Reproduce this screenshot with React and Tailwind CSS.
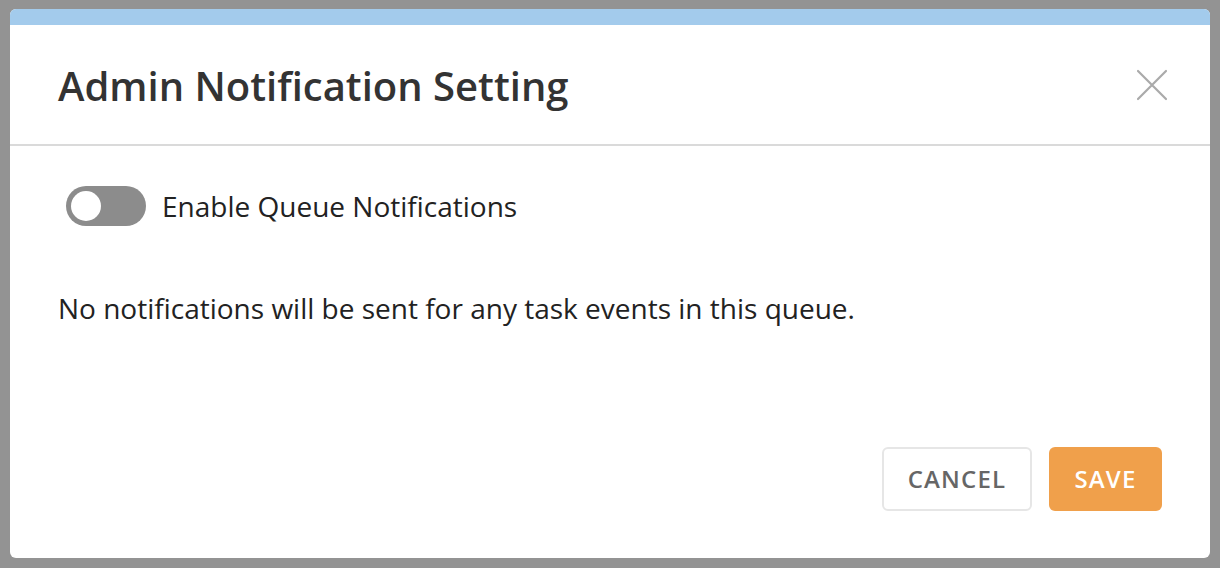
import { useState } from "react";

function App() {
  const [enabled, setEnabled] = useState(false);

  return (
    <div
      className="w-[1220px] h-[568px] bg-[#939393] pt-[9px] px-[10px] pb-[10px]"
      style={{ fontFamily: '"Open Sans", "Noto Sans", sans-serif' }}
    >
      <div className="h-full bg-white rounded-[6px] overflow-hidden flex flex-col">
        {/* top accent strip */}
        <div className="h-[16px] bg-[#a3cbec]" />

        {/* header */}
        <div className="h-[121px] flex items-center justify-between pl-[48px] pr-[42px] border-b-2 border-[#dadada]">
          <h1 className="text-[40px] leading-[48px] font-semibold text-[#333333] mt-[2px]">
            Admin Notification Setting
          </h1>
          <button className="w-[32px] h-[32px] flex items-center justify-center">
            <svg width="32" height="32" viewBox="0 0 32 32" fill="none">
              <path d="M2 2L30 30M30 2L2 30" stroke="#aaaaaa" strokeWidth="2.2" strokeLinecap="round" />
            </svg>
          </button>
        </div>

        {/* body */}
        <div className="px-[48px] pt-[40px]">
          <div className="flex items-center gap-[16px]">
            <button
              onClick={() => setEnabled(!enabled)}
              className={
                "ml-[8px] w-[80px] h-[40px] rounded-full flex items-center px-[5px] " +
                (enabled ? "bg-[#f0a04b] justify-end" : "bg-[#8c8c8c] justify-start")
              }
            >
              <span className="w-[30px] h-[30px] rounded-full bg-white" />
            </button>
            <span className="text-[28px] leading-[40px] text-[#222222]">Enable Queue Notifications</span>
          </div>

          <p className="mt-[62px] text-[28px] leading-[40px] text-[#222222]">
            No notifications will be sent for any task events in this queue.
          </p>
        </div>

        {/* footer */}
        <div className="mt-auto flex justify-end gap-[17px] pr-[48px] pb-[47px]">
          <button className="w-[150px] h-[64px] rounded-[6px] border-2 border-[#e6e6e6] text-[24px] font-semibold tracking-[1.2px] text-[#666666]">
            CANCEL
          </button>
          <button className="w-[113px] h-[64px] rounded-[6px] bg-[#f0a04b] text-[24px] font-semibold tracking-[1.2px] text-white">
            SAVE
          </button>
        </div>
      </div>
    </div>
  );
}

export default App;
